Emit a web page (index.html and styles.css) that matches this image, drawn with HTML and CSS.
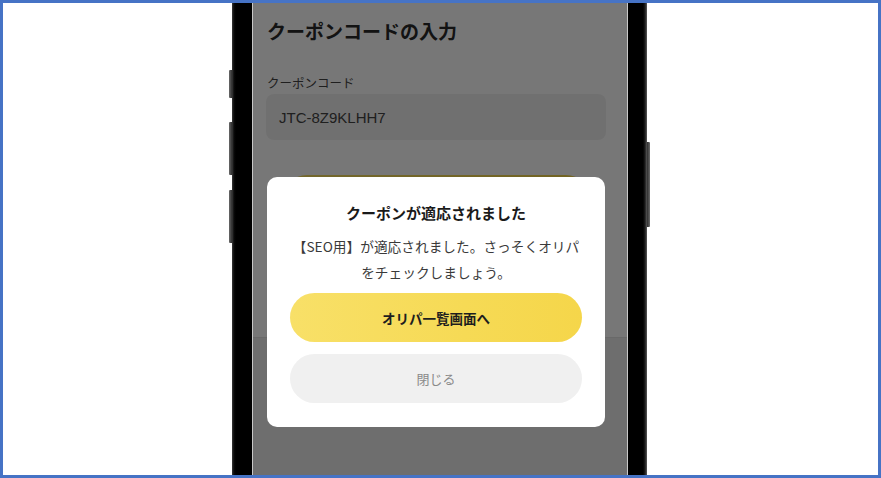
FILE: index.html
```html
<!DOCTYPE html>
<html lang="ja">
<head>
<meta charset="utf-8">
<title>クーポンコードの入力</title>
<link rel="stylesheet" href="styles.css">
</head>
<body>
<div class="frame">
  <div class="phone">
    <div class="side-buttons side-left">
      <span class="hw-btn hw-mute"></span>
      <span class="hw-btn hw-vol-up"></span>
      <span class="hw-btn hw-vol-down"></span>
    </div>
    <div class="bezel bezel-left"></div>
    <div class="screen">
      <div class="content">
        <h1 class="page-title">クーポンコードの入力</h1>
        <label class="field-label">クーポンコード</label>
        <div class="field-input">JTC-8Z9KLHH7</div>
        <div class="apply-btn"></div>
      </div>
      <div class="footer"></div>
      <div class="overlay"></div>
      <div class="modal">
        <h2 class="modal-title">クーポンが適応されました</h2>
        <p class="modal-text">【SEO用】が適応されました。さっそくオリパ<br>をチェックしましょう。</p>
        <div class="modal-actions">
          <button class="btn btn-primary">オリパ一覧画面へ</button>
          <button class="btn btn-secondary">閉じる</button>
        </div>
      </div>
    </div>
    <div class="bezel bezel-right"></div>
    <div class="side-buttons side-right">
      <span class="hw-btn hw-power"></span>
    </div>
  </div>
</div>
</body>
</html>
```

FILE: styles.css
```css
* { box-sizing: border-box; }

html, body {
  margin: 0;
  padding: 0;
  background: #ffffff;
}

body {
  font-family: "Noto Sans CJK JP", "Noto Sans", sans-serif;
}

.frame {
  width: 881px;
  height: 478px;
  border: 3px solid #4673c5;
  background: #ffffff;
  overflow: hidden;
  display: flex;
  padding-left: 226px;
}

.phone {
  display: flex;
  height: 100%;
}

.side-buttons {
  width: 3px;
  display: flex;
  flex-direction: column;
}

.side-left {
  padding-top: 67px;
}

.hw-btn {
  display: block;
  width: 3px;
  background: linear-gradient(90deg, #6a6a6a, #2e2e2e);
  border-radius: 1px 0 0 1px;
}

.hw-mute { height: 28px; }
.hw-vol-up { height: 53px; margin-top: 24px; }
.hw-vol-down { height: 53px; margin-top: 15px; }

.side-right {
  padding-top: 139px;
}

.hw-power {
  height: 85px;
  background: linear-gradient(90deg, #2e2e2e, #6a6a6a);
  border-radius: 0 1px 1px 0;
}

.bezel {
  height: 100%;
  background: #000000;
}

.bezel-left {
  width: 20px;
  background: linear-gradient(90deg, #3a3a3a 0, #0a0a0a 2px, #000 4px, #000 100%);
}

.bezel-right {
  width: 19px;
  background: linear-gradient(90deg, #000 0, #000 15px, #1c1c1c 17px, #5a5a5a 19px);
}

.screen {
  position: relative;
  width: 376px;
  height: 100%;
  background: #ffffff;
  border-left: 1px solid #c8c8c8;
  border-right: 1px solid #c8c8c8;
  display: flex;
  flex-direction: column;
  overflow: hidden;
}

.content {
  height: 334px;
  padding: 14px 21px 0 13px;
  display: flex;
  flex-direction: column;
}

.page-title {
  margin: 0;
  font-size: 19px;
  line-height: 28px;
  font-weight: 700;
  color: #2a2a2a;
  padding-left: 1px;
}

.field-label {
  margin-top: 29px;
  font-size: 12.5px;
  line-height: 18px;
  color: #444444;
  padding-left: 1px;
}

.field-input {
  margin-top: 2px;
  height: 46px;
  border-radius: 8px;
  background: #f1f1f1;
  padding: 0 13px;
  display: flex;
  align-items: center;
  font-family: "Liberation Sans", Arial, sans-serif;
  font-size: 15px;
  color: #444444;
}

.apply-btn {
  margin: 35px 16px 0 17px;
  height: 48px;
  border-radius: 24px;
  background: linear-gradient(90deg, #f7de62, #f5d64a);
}

.footer {
  flex: 1;
  background: #ececec;
  border-top: 1px solid #e2e2e2;
}

.overlay {
  position: absolute;
  inset: 0;
  background: rgba(0, 0, 0, 0.535);
}

.modal {
  position: absolute;
  top: 174px;
  left: 14px;
  width: 338px;
  background: #ffffff;
  border-radius: 10px;
  padding: 25px 23px 24px;
  text-align: center;
}

.modal-title {
  margin: 0;
  font-size: 15px;
  line-height: 22px;
  font-weight: 700;
  color: #1a1a1a;
}

.modal-text {
  margin: 9px 0 0;
  font-size: 13.7px;
  line-height: 26px;
  color: #3a3a3a;
  white-space: nowrap;
}

.modal-actions {
  margin-top: 8px;
  display: flex;
  flex-direction: column;
  gap: 12px;
}

.btn {
  display: block;
  width: 100%;
  height: 49px;
  border: none;
  border-radius: 25px;
  font-family: "Noto Sans CJK JP", "Noto Sans", sans-serif;
  font-size: 13.5px;
  padding: 0;
}

.btn-primary {
  background: linear-gradient(90deg, #f8e068 0%, #f6da55 60%, #f5d64a 100%);
  color: #1e1e1e;
  font-weight: 700;
}

.btn-secondary {
  background: #f0f0f0;
  color: #8a8a8a;
  font-size: 13px;
  font-weight: 400;
}
```
